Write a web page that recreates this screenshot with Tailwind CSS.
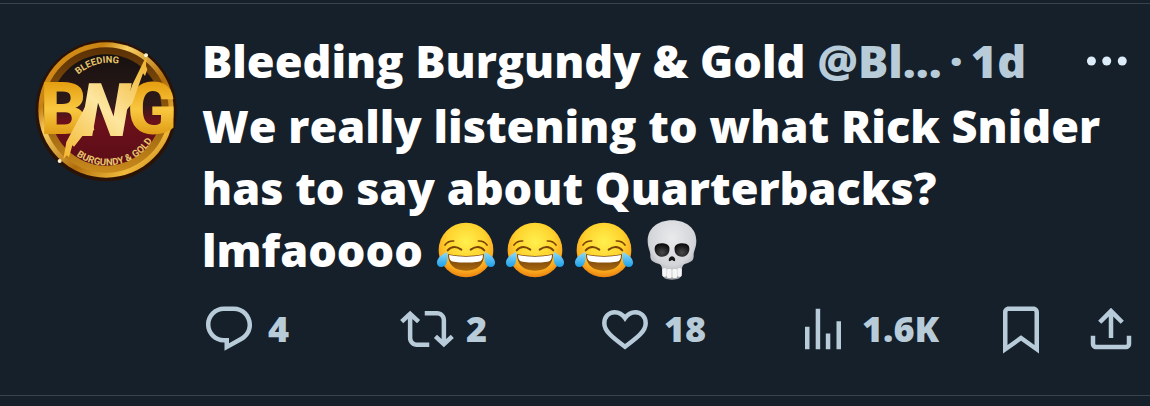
<!DOCTYPE html>
<html lang="en">
<head>
    <meta charset="UTF-8">
    <title>Bleeding Burgundy & Gold</title>
    <meta name="viewport" content="width=device-width, initial-scale=1.0">
    <script src="https://cdn.jsdelivr.net/npm/@tailwindcss/browser@4"></script>
</head>
<body class="bg-[#16202a] text-white font-['Open_Sans',sans-serif] font-extrabold overflow-x-hidden">
    <!-- Shared shapes -->
    <svg class="absolute size-0" aria-hidden="true">
        <defs>
            <radialGradient id="faceFill" cx="0.5" cy="0.35" r="0.65">
                <stop offset="0" stop-color="#fff04d"/>
                <stop offset="0.55" stop-color="#ffd22e"/>
                <stop offset="0.85" stop-color="#f9a51d"/>
                <stop offset="1" stop-color="#e98210"/>
            </radialGradient>
            <linearGradient id="mouthFill" x1="0" y1="0" x2="0" y2="1">
                <stop offset="0" stop-color="#6b3a08"/>
                <stop offset="1" stop-color="#a8680f"/>
            </linearGradient>
            <linearGradient id="tearFill" x1="0" y1="0" x2="0" y2="1">
                <stop offset="0" stop-color="#8fdcfb"/>
                <stop offset="1" stop-color="#1b9fe8"/>
            </linearGradient>
            <radialGradient id="boneFill" cx="0.5" cy="0.3" r="0.7">
                <stop offset="0" stop-color="#e9eaec"/>
                <stop offset="0.65" stop-color="#d3d5d9"/>
                <stop offset="1" stop-color="#9b9da3"/>
            </radialGradient>
            <radialGradient id="socketFill" cx="0.5" cy="0.7" r="0.6">
                <stop offset="0" stop-color="#4a4a4c"/>
                <stop offset="1" stop-color="#0f0f10"/>
            </radialGradient>
        </defs>
        <symbol id="joy" viewBox="0 0 180 180">
            <circle cx="90" cy="90" r="82" fill="url(#faceFill)"/>
            <g fill="none" stroke="#7a4406" stroke-linecap="round">
                <path d="M27 75Q36 62 53 63" stroke-width="5"/>
                <path d="M153 75Q144 62 127 63" stroke-width="5"/>
                <path d="M35 91Q52 72 76 89" stroke-width="6"/>
                <path d="M145 91Q128 72 104 89" stroke-width="6"/>
            </g>
            <path d="M36 103Q90 113 144 103Q143 151 90 152Q37 151 36 103Z" fill="url(#mouthFill)"/>
            <path d="M39 105Q90 115 141 105Q141 125 127 125Q90 130 53 125Q39 125 39 105Z" fill="#fff"/>
            <path d="M33 96C22 102 2 112 3 129C4 146 27 144 32 128C36 115 35 103 33 96Z" fill="url(#tearFill)"/>
            <path d="M147 96C158 102 178 112 177 129C176 146 153 144 148 128C144 115 145 103 147 96Z" fill="url(#tearFill)"/>
        </symbol>
        <symbol id="skull" viewBox="0 0 150 180">
            <path d="M75 1C30 1 2 28 2 62C2 85 11 92 10 107C9 124 23 128 37 132C46 137 45 147 46 160C47 176 57 179 75 179C93 179 103 176 104 160C105 147 104 137 113 132C127 128 141 124 140 107C139 92 148 85 148 62C148 28 120 1 75 1Z" fill="url(#boneFill)"/>
            <path d="M25 77C32 66 64 67 67 82C70 101 58 111 43 110C26 109 19 91 25 77Z" fill="url(#socketFill)"/>
            <path d="M125 77C118 66 86 67 83 82C80 101 92 111 107 110C124 109 131 91 125 77Z" fill="url(#socketFill)"/>
            <path d="M75 109C69 109 63 119 66 123C70 125 73 120 75 120C77 120 80 125 84 123C87 119 81 109 75 109Z" fill="#161617"/>
            <path d="M45 144Q75 153 105 144L103 164Q75 171 47 164Z" fill="#b4b6ba"/>
            <g fill="#f6f6f7">
                <rect x="46" y="145" width="13" height="25" rx="4"/>
                <rect x="60" y="147" width="14" height="27" rx="4"/>
                <rect x="76" y="147" width="14" height="27" rx="4"/>
                <rect x="91" y="145" width="13" height="25" rx="4"/>
            </g>
        </symbol>
    </svg>

    <article class="mt-[3px] border-y border-[#38444d] flex gap-6 pl-[34px] pr-3 pt-[26px] pb-[39px]">
        <!-- Avatar -->
        <a href="#" class="shrink-0 mt-2 size-36" aria-label="Bleeding Burgundy & Gold profile">
            <svg class="size-36" viewBox="45 24 432 432">
                <defs>
                    <linearGradient id="ring" x1="0" y1="0" x2="1" y2="1">
                        <stop offset="0" stop-color="#e09a1a"/>
                        <stop offset="0.25" stop-color="#c88212"/>
                        <stop offset="0.35" stop-color="#f8d063"/>
                        <stop offset="0.6" stop-color="#b06c0c"/>
                        <stop offset="0.8" stop-color="#f0b93a"/>
                        <stop offset="1" stop-color="#a9640b"/>
                    </linearGradient>
                    <linearGradient id="innerRing" x1="0" y1="0" x2="0" y2="1">
                        <stop offset="0" stop-color="#5a3006"/>
                        <stop offset="0.5" stop-color="#8d570b"/>
                        <stop offset="1" stop-color="#c98a1c"/>
                    </linearGradient>
                    <linearGradient id="disc" x1="0" y1="0" x2="0" y2="1">
                        <stop offset="0" stop-color="#15110f"/>
                        <stop offset="0.45" stop-color="#2e1a1a"/>
                        <stop offset="0.6" stop-color="#6b101b"/>
                        <stop offset="1" stop-color="#5c0d16"/>
                    </linearGradient>
                    <linearGradient id="letter" gradientUnits="userSpaceOnUse" x1="0" y1="150" x2="0" y2="325">
                        <stop offset="0" stop-color="#e39a0c"/>
                        <stop offset="0.5" stop-color="#f9c840"/>
                        <stop offset="1" stop-color="#dc960f"/>
                    </linearGradient>
                    <linearGradient id="slash" gradientUnits="userSpaceOnUse" x1="130" y1="390" x2="390" y2="90">
                        <stop offset="0" stop-color="#f3b62c"/>
                        <stop offset="0.5" stop-color="#fde6a0"/>
                        <stop offset="1" stop-color="#f0b22a"/>
                    </linearGradient>
                    <path id="arcTop" d="M178 134A140 140 0 0 1 312 104"/>
                    <path id="arcBottom" d="M172 377A160 160 0 0 0 404 325"/>
                </defs>
                <circle cx="261" cy="242" r="212" fill="#2a1206"/>
                <circle cx="261" cy="240" r="203" fill="url(#ring)"/>
                <circle cx="261" cy="240" r="188" fill="url(#innerRing)"/>
                <circle cx="261" cy="240" r="167" fill="url(#disc)"/>
                <g font-family="Roboto, sans-serif" font-weight="700" fill="#e8c46a">
                    <text font-size="28"><textPath href="#arcTop">BLEEDING</textPath></text>
                    <text font-size="29"><textPath href="#arcBottom">BURGUNDY &amp; GOLD</textPath></text>
                </g>
                <g font-family="Roboto, sans-serif" font-weight="900" fill="url(#letter)">
                    <text x="64" y="312" font-size="218">B</text>
                    <text x="325" y="312" font-size="218">G</text>
                </g>
                <!-- Brush tails running off the N -->
                <path d="M304 262L340 164L375 92L382 82L381 108L385 118L378 138L372 130L364 152L340 220Z" fill="url(#slash)"/>
                <path d="M204 220L226 300L192 316L165 350L160 346L150 382L143 376L133 388L142 336Z" fill="url(#slash)"/>
                <text x="182" y="318" font-family="Roboto, sans-serif" font-weight="900" font-style="italic" font-size="222" fill="url(#slash)">N</text>
                <circle cx="381" cy="76" r="6" fill="#fff3cf"/>
                <circle cx="122" cy="393" r="6" fill="#fff3cf"/>
            </svg>
        </a>

        <div class="flex-1 min-w-0">
            <!-- Name row -->
            <header class="flex items-center justify-between leading-[62px] text-[45px]">
                <div class="flex gap-3 whitespace-nowrap">
                    <h1>Bleeding Burgundy &amp; Gold</h1>
                    <p class="flex gap-2 text-[#b8cbd9]"><span>@Bl...</span><span>·</span><span>1d</span></p>
                </div>
                <button type="button" aria-label="More" class="shrink-0">
                    <svg class="size-[54px]" viewBox="0 0 24 24" fill="#dcecf8">
                        <circle cx="3.3" cy="12" r="2"/>
                        <circle cx="10.1" cy="12" r="2"/>
                        <circle cx="17" cy="12" r="2"/>
                    </svg>
                </button>
            </header>

            <!-- Tweet text -->
            <div class="mt-[3px] leading-[62px] text-[45px]">
                <p>We really listening to what Rick Snider<br>has to say about Quarterbacks?</p>
                <p class="flex items-center gap-[9px]">
                    <span class="mr-1">lmfaoooo</span>
                    <svg class="size-[60px]" role="img" aria-label="Face with tears of joy"><use href="#joy"/></svg>
                    <svg class="size-[60px]" role="img" aria-label="Face with tears of joy"><use href="#joy"/></svg>
                    <svg class="size-[60px]" role="img" aria-label="Face with tears of joy"><use href="#joy"/></svg>
                    <svg class="w-[50px] h-[60px] ml-1" role="img" aria-label="Skull"><use href="#skull"/></svg>
                </p>
            </div>

            <!-- Actions -->
            <div class="mt-[21px] flex text-[#b8cbd9] text-4xl leading-[54px]">
                <div class="flex-1">
                    <button type="button" aria-label="Reply" class="flex items-center gap-3">
                        <svg class="size-[54px]" viewBox="0 0 24 24" fill="currentColor"><path d="M1.751 10c0-4.42 3.584-8 8.005-8h4.366c4.49 0 8.129 3.64 8.129 8.13 0 2.96-1.607 5.68-4.196 7.11l-8.054 4.46v-3.69h-.067c-4.49.1-8.183-3.51-8.183-8.01zm8.005-6c-3.317 0-6.005 2.69-6.005 6 0 3.37 2.77 6.08 6.138 6.01l.351-.01h1.761v2.3l5.087-2.81c1.951-1.08 3.163-3.13 3.163-5.36 0-3.39-2.744-6.13-6.129-6.13H9.756z"/></svg>
                        <span>4</span>
                    </button>
                </div>
                <div class="flex-1">
                    <button type="button" aria-label="Repost" class="flex items-center gap-3">
                        <svg class="size-[54px]" viewBox="0 0 24 24" fill="currentColor"><path d="M4.5 3.88l4.432 4.14-1.364 1.46L5.5 7.55V16c0 1.1.896 2 2 2H13v2H7.5c-2.209 0-4-1.79-4-4V7.55L1.432 9.48.068 8.02 4.5 3.88zM16.5 6H11V4h5.5c2.209 0 4 1.79 4 4v8.45l2.068-1.93 1.364 1.46-4.432 4.14-4.432-4.14 1.364-1.46 2.068 1.93V8c0-1.1-.896-2-2-2z"/></svg>
                        <span>2</span>
                    </button>
                </div>
                <div class="flex-1">
                    <button type="button" aria-label="Like" class="flex items-center gap-3">
                        <svg class="size-[54px]" viewBox="0 0 24 24" fill="none" stroke="currentColor" stroke-width="2"><path d="M12 7.1C10.7 5.2 9 4.5 7.4 4.5C4.8 4.5 2.8 6.6 2.8 9.4C2.8 13 6.5 15.8 12 19.9C17.5 15.8 21.2 13 21.2 9.4C21.2 6.6 19.2 4.5 16.6 4.5C15 4.5 13.3 5.2 12 7.1Z"/></svg>
                        <span>18</span>
                    </button>
                </div>
                <div class="flex-1">
                    <button type="button" aria-label="Views" class="flex items-center gap-3">
                        <svg class="size-[54px]" viewBox="0 0 24 24" fill="currentColor"><path d="M8.75 21V3h2v18h-2zM18 21V8.5h2V21h-2zM4 21l.004-10h2L6 21H4zm9.248 0v-7h2v7h-2z"/></svg>
                        <span>1.6K</span>
                    </button>
                </div>
                <div class="flex gap-9">
                    <button type="button" aria-label="Bookmark">
                        <svg class="size-[54px]" viewBox="0 0 24 24" fill="currentColor"><path d="M4 4.5C4 3.12 5.119 2 6.5 2h11C18.881 2 20 3.12 20 4.5v18.44l-8-5.71-8 5.71V4.5zM6.5 4c-.276 0-.5.22-.5.5v14.56l6-4.29 6 4.29V4.5c0-.28-.224-.5-.5-.5h-11z"/></svg>
                    </button>
                    <button type="button" aria-label="Share">
                        <svg class="size-[54px]" viewBox="0 0 24 24" fill="currentColor"><path d="M12 2.59l5.7 5.7-1.41 1.42L13 6.41V16h-2V6.41l-3.3 3.3-1.41-1.42L12 2.59zM21 15v3.5c0 1.38-1.12 2.5-2.5 2.5h-13C4.12 21 3 19.88 3 18.5V15h2v3.5c0 .28.22.5.5.5h13c.28 0 .5-.22.5-.5V15h2z"/></svg>
                    </button>
                </div>
            </div>
        </div>
    </article>
</body>
</html>
